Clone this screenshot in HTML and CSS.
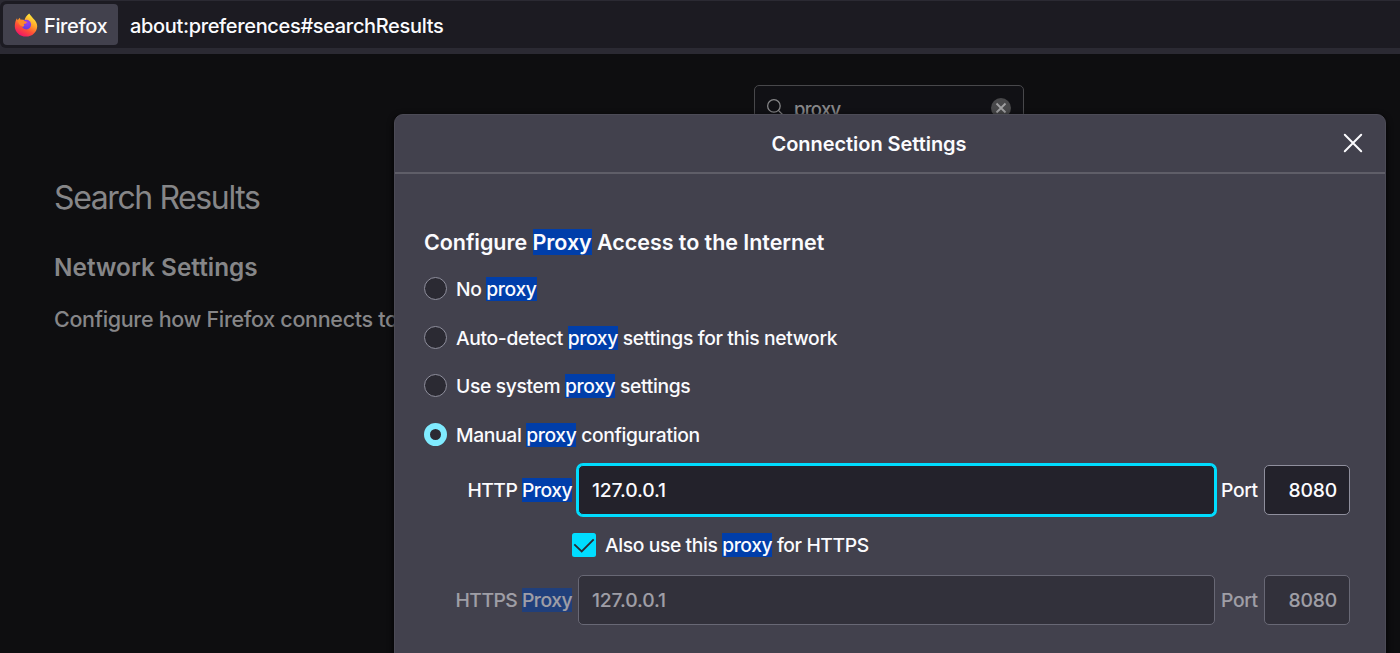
FILE: index.html
```
<!DOCTYPE html>
<html lang="en">
<head>
  <meta charset="UTF-8">
  <meta name="viewport" content="width=device-width, initial-scale=1.0">
  <title>Settings</title>
  <link rel="stylesheet" href="styles.css">
</head>
<body>
  <header class="toolbar">
    <div class="urlbar">
      <div class="identity">
        <svg class="firefox-logo" viewBox="0 0 24 24" width="24" height="24">
          <defs>
            <linearGradient id="flame" x1="0.8" y1="0.1" x2="0.3" y2="1">
              <stop offset="0" stop-color="#ffe83c"/>
              <stop offset="0.35" stop-color="#ffa52a"/>
              <stop offset="0.65" stop-color="#ff4f37"/>
              <stop offset="1" stop-color="#f0126a"/>
            </linearGradient>
            <radialGradient id="globe" cx="0.6" cy="0.3" r="0.75">
              <stop offset="0" stop-color="#a03df0"/>
              <stop offset="1" stop-color="#5a3fe0"/>
            </radialGradient>
          </defs>
          <path fill="url(#flame)" d="M15.200 0.600c1.200 1.600 2.200 3 4 4.800 2.600 2.300 4 5 4 7.800 0 5.800-4.900 10.400-11.200 10.400S0.800 19 0.800 13.200c0-3.200 0.900-6.200 2.200-8 0.100 0.900 0.300 1.400 0.700 2C4.500 6 5.300 5.200 6 4.800c0 1 0.200 1.600 0.700 2.200 1.400-0.300 2.600-0.200 3.800 0.300 0.700-2.700 2.200-5 4.700-6.700z"/>
          <circle fill="url(#globe)" cx="12.300" cy="11.600" r="4.800"/>
          <path fill="#ff8a2a" d="M3.600 7.500c2-1 4.800-1 6.800 0.600 0.700 0.600 1.800 0.600 2.600 0.800-0.300 1.100-1.300 1.600-2.500 1.900-0.900 0.300-0.800 1.400 0 2-1.600 1-2 1.500-3.100 0-1.600 0-3-3-3.800-5.300z"/>
        </svg>
        <span>Firefox</span>
      </div>
      <span class="url">about:preferences#searchResults</span>
    </div>
  </header>

  <main class="page">
    <div class="search-box">
      <svg class="search-icon" viewBox="0 0 16 16" width="17" height="17">
        <circle cx="6.500" cy="6.500" r="5.900"/>
        <path d="M10.700 10.700L15.300 15.300"/>
      </svg>
      <span class="search-text">proxy</span>
      <svg class="clear-icon" viewBox="0 0 20 20" width="20" height="20">
        <circle cx="10" cy="10" r="10"/>
        <path d="M5.500 5.500L14.500 14.500M14.500 5.500L5.500 14.500"/>
      </svg>
    </div>
    <h1>Search Results</h1>
    <h2>Network Settings</h2>
    <p class="description">Configure how Firefox connects to</p>
  </main>

  <section class="dialog">
    <div class="dialog-header">
      <span class="dialog-title">Connection Settings</span>
      <svg class="close-icon" viewBox="0 0 20 20" width="20" height="20">
        <path d="M1.800 1.800L18.200 18.200M18.200 1.800L1.800 18.200"/>
      </svg>
    </div>

    <div class="dialog-body">
      <h3>Configure <mark>Proxy</mark> Access to the Internet</h3>

      <div class="radio-group">
        <div class="radio-row"><span class="radio"></span><span class="radio-label">No <mark>proxy</mark></span></div>
        <div class="radio-row"><span class="radio"></span><span class="radio-label">Auto-detect <mark>proxy</mark> settings for this network</span></div>
        <div class="radio-row"><span class="radio"></span><span class="radio-label">Use system <mark>proxy</mark> settings</span></div>
        <div class="radio-row"><span class="radio checked"></span><span class="radio-label">Manual <mark>proxy</mark> configuration</span></div>
      </div>

      <div class="proxy-row">
        <span class="proxy-label">HTTP <mark>Proxy</mark></span>
        <div class="field host focused">127.0.0.1</div>
        <span class="port-label">Port</span>
        <div class="field port">8080</div>
      </div>

      <div class="share-row">
        <svg class="checkbox" viewBox="0 0 24 24" width="24" height="24">
          <rect width="24" height="24" rx="2.500"/>
          <path d="M2.300 11.300L9.700 18.500L21.700 6.300"/>
        </svg>
        <span>Also use this <mark>proxy</mark> for HTTPS</span>
      </div>

      <div class="proxy-row disabled">
        <span class="proxy-label">HTTPS <mark>Proxy</mark></span>
        <div class="field host">127.0.0.1</div>
        <span class="port-label">Port</span>
        <div class="field port">8080</div>
      </div>
    </div>
  </section>
</body>
</html>
```

FILE: styles.css
```
* {
  box-sizing: border-box;
}
body {
  font-family: Inter, "Liberation Sans", sans-serif;
  font-size: 19.3px;
  font-weight: 450;
  letter-spacing: -0.36px;
  background-color: #0e0e10;
  color: #fbfbfe;
  margin: 0;
  height: 653px;
  overflow: hidden;
  position: relative;
}
.toolbar {
  height: 54px;
  background-color: #2b2a33;
  padding-top: 1px;
}
.urlbar {
  display: flex;
  align-items: center;
  height: 47px;
  background-color: #1c1b22;
  border-radius: 6px 0 0 6px;
  padding-left: 3px;
}
.identity {
  display: flex;
  align-items: center;
  gap: 6px;
  width: 115px;
  height: 41px;
  padding-left: 11px;
  background-color: #42414d;
  border-radius: 4px;
  font-size: 20px;
}
.identity span {
  padding-top: 2px;
}
.firefox-logo {
  flex: none;
}
.url {
  margin-left: 12px;
  padding-top: 2px;
  font-size: 20px;
  letter-spacing: -0.34px;
}
.page {
  padding: 31px 0 0 54px;
  color: #868688;
}
.search-box {
  display: flex;
  align-items: center;
  width: 270px;
  height: 45px;
  margin-left: 700px;
  padding: 0 12px;
  background-color: #111115;
  border: 1px solid #48484b;
  border-radius: 5px;
}
.search-icon {
  fill: none;
  stroke: #868688;
  stroke-width: 1.2;
}
.search-text {
  flex: 1;
  margin-left: 10px;
  padding-top: 3px;
  font-size: 18.5px;
  letter-spacing: -0.7px;
}
.clear-icon circle {
  fill: #48484a;
}
.clear-icon path {
  stroke: #a0a0a2;
  stroke-width: 1.8;
}
h1 {
  margin: 48px 0 0;
  font-size: 32px;
  font-weight: 370;
  line-height: 40px;
  letter-spacing: -1.4px;
}
h2 {
  margin: 34px 0 0;
  font-size: 24.3px;
  font-weight: 600;
  line-height: 30px;
  letter-spacing: 0.05px;
}
.description {
  margin: 23px 0 0;
  font-size: 21.5px;
  line-height: 28px;
  letter-spacing: -0.32px;
}
.dialog {
  position: absolute;
  left: 394px;
  top: 114px;
  width: 992px;
  height: 560px;
  background-color: #42414d;
  border: 1px solid #4c4b56;
  border-radius: 9px;
  box-shadow: 0 2px 6px #000;
}
.dialog-header {
  display: flex;
  align-items: center;
  height: 59px;
  padding-right: 22px;
  border-bottom: 2px solid #5f5e68;
}
.dialog-title {
  flex: 1;
  padding-top: 1px;
  text-align: center;
  font-size: 20px;
  font-weight: 600;
  letter-spacing: -0.05px;
}
.close-icon {
  margin-bottom: 2px;
  fill: none;
  stroke: #fbfbfe;
  stroke-width: 2;
  stroke-linecap: round;
}
.dialog-body {
  padding: 54px 35px 0 29px;
}
mark {
  background-color: #003eaa;
  color: inherit;
}
h3 {
  margin: 0;
  font-size: 21.5px;
  font-weight: 600;
  line-height: 28px;
  letter-spacing: -0.05px;
}
.radio-group {
  margin-top: 8px;
}
.radio-row {
  display: flex;
  align-items: center;
  gap: 9px;
  height: 48.7px;
}
.radio-label {
  padding-top: 1.5px;
}
.radio {
  width: 23px;
  height: 23px;
  background-color: #2b2a33;
  border: 1px solid #8f8f9d;
  border-radius: 50%;
}
.radio.checked {
  border: 6px solid #80ebff;
}
.proxy-row {
  display: flex;
  align-items: center;
  height: 50px;
}
.radio-group + .proxy-row {
  margin-top: 6px;
}
.proxy-label {
  width: 148px;
  margin-right: 6px;
  padding-top: 1px;
  text-align: right;
  white-space: nowrap;
  letter-spacing: -0.5px;
}
.field {
  display: flex;
  align-items: center;
  height: 50px;
  padding: 1px 12px 0 13px;
  background-color: #23222b;
  border: 1px solid #8f8f9d;
  border-radius: 5px;
  letter-spacing: -0.15px;
}
.host {
  width: 637px;
  margin-right: 6px;
}
.host.focused {
  border-color: #00ddff;
  box-shadow: 0 0 0 2px #00ddff;
}
.port-label {
  width: 43px;
  padding-top: 1px;
}
.port {
  width: 86px;
  justify-content: flex-end;
}
.share-row {
  display: flex;
  align-items: center;
  gap: 9px;
  height: 24px;
  margin: 18px 0 18px 148px;
  letter-spacing: -0.4px;
}
.share-row span {
  padding-top: 1px;
}
.checkbox rect {
  fill: #00ddff;
}
.checkbox path {
  fill: none;
  stroke: #2b2a33;
  stroke-width: 1.8;
}
.disabled .proxy-label,
.disabled .port-label,
.disabled .field {
  opacity: 0.5;
}
```
